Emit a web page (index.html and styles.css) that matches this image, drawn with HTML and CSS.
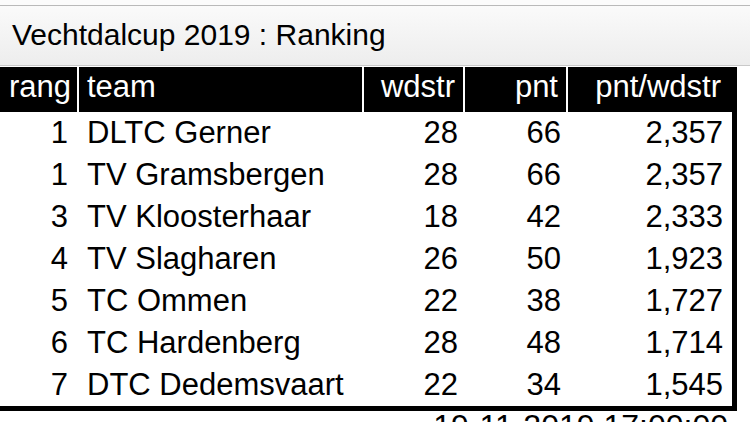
FILE: index.html
```html
<!DOCTYPE html>
<html lang="nl">
<head>
<meta charset="utf-8">
<title>Vechtdalcup 2019 : Ranking</title>
<link rel="stylesheet" href="styles.css">
</head>
<body>
<div class="topstrip"></div>
<div class="titlebar">Vechtdalcup 2019 : Ranking</div>
<table class="ranking">
  <colgroup>
    <col class="c-rang"><col class="c-team"><col class="c-wd"><col class="c-pnt"><col class="c-avg">
  </colgroup>
  <thead>
    <tr><th class="num">rang</th><th class="txt">team</th><th class="num">wdstr</th><th class="num">pnt</th><th class="num last">pnt/wdstr</th></tr>
  </thead>
  <tbody>
    <tr><td class="num">1</td><td class="txt">DLTC Gerner</td><td class="num">28</td><td class="num">66</td><td class="num last">2,357</td></tr>
    <tr><td class="num">1</td><td class="txt">TV Gramsbergen</td><td class="num">28</td><td class="num">66</td><td class="num last">2,357</td></tr>
    <tr><td class="num">3</td><td class="txt">TV Kloosterhaar</td><td class="num">18</td><td class="num">42</td><td class="num last">2,333</td></tr>
    <tr><td class="num">4</td><td class="txt">TV Slagharen</td><td class="num">26</td><td class="num">50</td><td class="num last">1,923</td></tr>
    <tr><td class="num">5</td><td class="txt">TC Ommen</td><td class="num">22</td><td class="num">38</td><td class="num last">1,727</td></tr>
    <tr><td class="num">6</td><td class="txt">TC Hardenberg</td><td class="num">28</td><td class="num">48</td><td class="num last">1,714</td></tr>
    <tr><td class="num">7</td><td class="txt">DTC Dedemsvaart</td><td class="num">22</td><td class="num">34</td><td class="num last">1,545</td></tr>
  </tbody>
</table>
<div class="footer">19-11-2019 17:00:00</div>
</body>
</html>
```

FILE: styles.css
```css
html, body {
  margin: 0;
  padding: 0;
  background: #ffffff;
}
body {
  font-family: "Liberation Sans", Arial, Helvetica, sans-serif;
  color: #000;
  width: 750px;
  overflow: hidden;
}
.topstrip {
  height: 5px;
  background: #fbfbfb;
  border-bottom: 1px solid #b9b9b9;
}
.titlebar {
  height: 47px;
  padding: 12px 0 0 12px;
  font-size: 30px;
  line-height: 34px;
  background: linear-gradient(#fafafa, #ededed);
  border-bottom: 1px solid #c9c9c9;
  margin-bottom: 1px;
}
.ranking {
  width: 737px;
  table-layout: fixed;
  border-collapse: separate;
  border-spacing: 0;
  border-right: 5px solid #000;
  border-bottom: 5px solid #000;
  font-size: 31px;
}
.c-rang { width: 77px; }
.c-team { width: 285px; }
.c-wd { width: 101px; }
.c-pnt { width: 103px; }
.c-avg { width: 166px; }
.ranking th {
  background: #000;
  color: #fff;
  font-weight: normal;
  height: 39px;
  line-height: 39px;
  padding: 0 8px 6px 8px;
  white-space: nowrap;
}
.ranking th + th {
  border-left: 2px solid #fff;
}
.ranking th:first-child {
  padding-right: 6px;
}
.ranking td {
  height: 42px;
  line-height: 42px;
  padding: 0 5px;
  white-space: nowrap;
}
.ranking td + td {
  border-left: 2px solid #fff;
}
.ranking td.txt { padding-left: 8px; }
.ranking td:first-child { padding-right: 9px; }
.ranking .num { text-align: right; }
.ranking .txt { text-align: left; }
.ranking td.last { padding-right: 9px; }
.ranking th.last { padding-right: 11px; }
.footer {
  width: 728px;
  text-align: right;
  font-size: 32px;
  line-height: 30px;
}
```
